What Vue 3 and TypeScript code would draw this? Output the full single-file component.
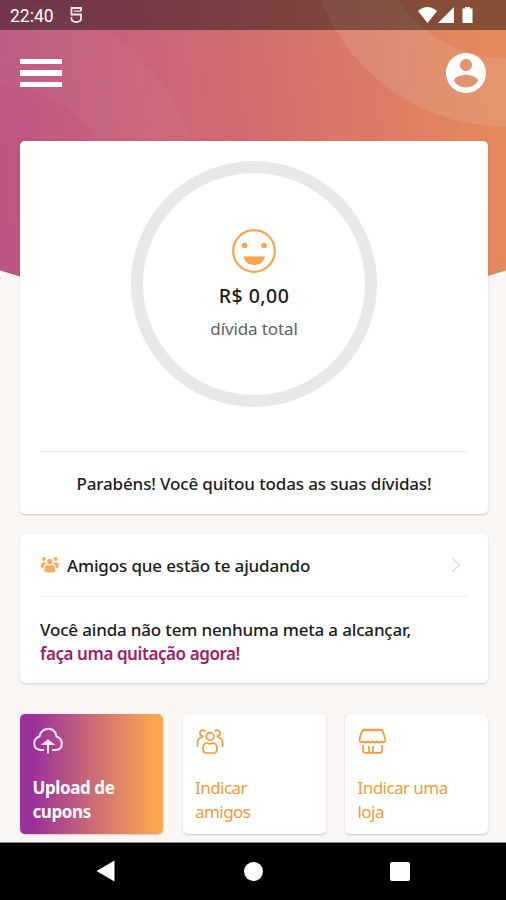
<script setup lang="ts">
interface Action {
  id: string
  lines: string[]
  primary?: boolean
}

const actions: Action[] = [
  { id: 'upload', lines: ['Upload de', 'cupons'], primary: true },
  { id: 'friends', lines: ['Indicar', 'amigos'] },
  { id: 'store', lines: ['Indicar uma', 'loja'] },
]
</script>

<template>
  <div class="screen">
    <svg class="backdrop" viewBox="0 0 506 290" aria-hidden="true">
      <defs>
        <linearGradient id="hero" gradientUnits="userSpaceOnUse" x1="0" y1="150" x2="490" y2="100">
          <stop offset="0" stop-color="#bd5684" />
          <stop offset="0.5" stop-color="#d06c70" />
          <stop offset="1" stop-color="#e4885d" />
        </linearGradient>
        <clipPath id="edge">
          <path d="M0 0H506V270.500L486 276.500Q420 290 253 290T20 276.500L0 270.500Z" />
        </clipPath>
      </defs>
      <g clip-path="url(#edge)">
        <rect width="506" height="290" fill="url(#hero)" />
        <circle cx="506" cy="-71" r="163.500" class="ring right" />
        <circle cx="0" cy="200" r="157" class="ring left" />
      </g>
    </svg>

    <header class="status">
      <span class="clock">22:40</span>
      <svg class="notice" viewBox="0 0 14 18">
        <path d="M12 5V2H2.500v6.500H12V12.500q0 3.500-4.700 3.500t-4.800-3.500V11" />
        <path d="M5 5.200H12" class="thin" />
      </svg>
      <svg class="signals" viewBox="0 0 56 18">
        <path d="M0 5Q9-3 19 5L9.500 17Z" />
        <path d="M36 1V17H20Z" />
        <path d="M47 1h5v1.500h2.500V17h-10V2.500H47Z" />
      </svg>
    </header>

    <nav class="topbar">
      <span class="burger"><i></i><i></i><i></i></span>
      <svg class="avatar" viewBox="2 2 20 20">
        <path d="M12 2C6.480 2 2 6.480 2 12s4.480 10 10 10 10-4.480 10-10S17.520 2 12 2zm0 3c1.660 0 3 1.340 3 3s-1.340 3-3 3-3-1.340-3-3 1.340-3 3-3zm0 14.200c-2.500 0-4.710-1.280-6-3.220.030-1.990 4-3.080 6-3.080 1.990 0 5.970 1.090 6 3.080-1.290 1.940-3.500 3.220-6 3.220z" />
      </svg>
    </nav>

    <main class="content">
      <section class="card debt">
        <div class="gauge">
          <svg class="smile" viewBox="0 0 44 44">
            <circle cx="22" cy="22" r="20.800" class="face" />
            <circle cx="12.500" cy="16.500" r="2.800" />
            <circle cx="32" cy="16.500" r="2.800" />
            <path d="M11.500 27.500H33Q31 36 22.200 36T11.500 27.500Z" />
          </svg>
          <strong class="amount">R$ 0,00</strong>
          <span class="caption">dívida total</span>
        </div>
        <p class="message">Parabéns! Você quitou todas as suas dívidas!</p>
      </section>

      <section class="card helpers">
        <div class="title">
          <svg class="crowd" viewBox="0 0 20 18">
            <circle cx="4" cy="3" r="2" /><circle cx="15.500" cy="3" r="2" />
            <circle cx="9.800" cy="5.500" r="2.700" />
            <path d="M1 11Q0 6 4 6.200q2 0 3 1.800-3 0-3.500 4Q2 12.500 1 11ZM18.500 11Q20 6 15.500 6.200q-2 0-3 1.800 3 0 3.500 4 1.800.500 2.500-1Z" />
            <path d="M4.500 13Q4.500 9 8 9q1.800 1 3.600 0 3.400 0 3.400 4l.500 2q-1.500 1.500-4 1.500H8q-2.500 0-4-1.500Z" />
          </svg>
          <span class="heading">Amigos que estão te ajudando</span>
          <svg class="chevron" viewBox="0 0 10 16"><path d="M1 1l7.500 7L1 15" /></svg>
        </div>
        <p class="goal">
          <span class="need">Você ainda não tem nenhuma meta a alcançar,</span><br />
          <a class="link">faça uma quitação agora!</a>
        </p>
      </section>

      <section class="actions">
        <article v-for="a in actions" :key="a.id" class="card action" :class="{ primary: a.primary }">
          <svg v-if="a.id === 'upload'" class="icon" viewBox="0 0 30 28">
            <path d="M11 23H7.500Q1.500 22.500 1.200 16.500 1.200 11.500 6.500 9.500 8 2.500 15 1.800 22 1.500 23.500 9.500 28.500 11 28.800 16.500 28.800 22.500 23 23H19" />
            <path d="M15 26.500V15M10.500 17L15 13.500 19.500 17Z" />
          </svg>
          <svg v-else-if="a.id === 'friends'" class="icon" viewBox="0 0 30 28">
            <circle cx="14" cy="9.500" r="3.800" />
            <path d="M9.500 4.500Q8 2.500 6 3.200 3.500 4 4 6.800 4.500 9 7.500 9.500M18.500 4.500Q20 2.500 22 3.200 24.500 4 24 6.800 23.500 9 20.500 9.500M1.500 20V15Q2 10.500 6.500 10.500M26.500 20V15Q26 10.500 21.500 10.500M11 16Q7 16.500 7 21q0 5 3 5h8q3 0 3-5 0-4.500-4-5-3 1.500-6 0Z" />
          </svg>
          <svg v-else class="icon" viewBox="0 0 30 28">
            <path d="M5 3H24" class="roof" />
            <path d="M5 3H24Q26.500 8 27.500 13.500q-1.500 3-4 1-2.200 2-4.500 0-2.200 2-4.500 0-2.300 2-4.500 0-2.200 2-4.500 0-3 2-4-1Q2 7 5 3ZM5 18v5.500q0 2.300 2 2.300H22q2 0 2-2.300V18M11 25.500V19M15 19v6.500" />
          </svg>
          <span class="label"><template v-for="(line, i) in a.lines" :key="line"><br v-if="i" />{{ line }}</template></span>
        </article>
      </section>
    </main>

    <footer class="system">
      <svg class="back" viewBox="0 0 18 22"><path d="M18 .500V21.500L0 11Z" /></svg>
      <span class="home"></span>
      <span class="recent"></span>
    </footer>
  </div>
</template>

<style>
body {
  margin: 0;
}
</style>

<style scoped>
.screen {
  position: relative;
  box-sizing: border-box;
  width: 506px;
  height: 900px;
  overflow: hidden;
  display: flex;
  flex-direction: column;
  background: #faf6f3;
  font-family: 'Noto Sans', 'Open Sans', sans-serif;
  color: #1c1c1c;
}
.backdrop {
  position: absolute;
  inset: 0 auto auto 0;
  width: 506px;
  height: 290px;
}
.ring {
  fill: none;
  stroke: #e8f0d8;
}
.ring.right {
  stroke-width: 69px;
  stroke-opacity: 0.13;
}
.ring.left {
  stroke-width: 86px;
  stroke-opacity: 0.04;
}
.status {
  position: relative;
  display: flex;
  align-items: center;
  height: 30px;
  padding: 0 32px 0 10px;
  flex: none;
  box-sizing: border-box;
  background: rgba(0, 0, 0, 0.41);
  color: #fff;
}
.clock {
  width: 44px;
  font: 400 17.500px/30px Roboto, sans-serif;
  padding-top: 2px;
}
.notice {
  width: 14px;
  height: 18px;
  margin-left: 15px;
  fill: none;
  stroke: #f3e6ea;
  stroke-width: 1.800;
}
.thin {
  stroke-width: 1.300;
}
.signals {
  width: 56px;
  height: 18px;
  margin-left: auto;
  fill: #fff;
}
.topbar {
  position: relative;
  display: flex;
  justify-content: space-between;
  flex: none;
  box-sizing: border-box;
  height: 111px;
  padding: 23px 20px 0;
}
.burger {
  display: flex;
  flex-direction: column;
  gap: 6px;
  width: 42px;
  padding-top: 6px;
}
.burger i {
  height: 5.300px;
  background: #fff;
}
.avatar {
  width: 40px;
  height: 40px;
  fill: #fff;
}
.content {
  position: relative;
  flex: none;
  box-sizing: border-box;
  height: 701px;
  padding: 0 18px 0 20px;
}
.card {
  box-sizing: border-box;
  border-radius: 5px;
  background: #fff;
  box-shadow: 0 1px 2px rgba(60, 50, 50, 0.22);
}
.debt {
  display: flex;
  flex-direction: column;
  height: 373px;
  padding: 19.500px 20px 0;
}
.gauge {
  box-sizing: border-box;
  display: flex;
  flex-direction: column;
  align-items: center;
  align-self: center;
  width: 246px;
  height: 246px;
  padding-top: 56.500px;
  border: 12px solid #e8e8e8;
  border-radius: 50%;
}
.smile {
  width: 44px;
  height: 44px;
  fill: #faa54c;
}
.face {
  fill: none;
  stroke: #faa54c;
  stroke-width: 2.200;
}
.amount {
  margin-top: 9px;
  font-size: 19.500px;
  font-weight: 500;
  line-height: 28px;
  letter-spacing: 0.450px;
}
.caption {
  margin-top: 6px;
  font-size: 17px;
  font-weight: 400;
  line-height: 26px;
  letter-spacing: -0.120px;
  color: #626262;
}
.message {
  margin: 44.500px 0 0;
  border-top: 1px solid #eee;
  padding-top: 19px;
  text-align: center;
  font-size: 17px;
  font-weight: 500;
  line-height: 26px;
  letter-spacing: -0.140px;
}
.helpers {
  height: 149px;
  margin-top: 20px;
  padding: 0 20px;
}
.title {
  display: flex;
  align-items: center;
  height: 62px;
  border-bottom: 1px solid #f0f0f0;
}
.crowd {
  width: 20px;
  height: 18px;
  margin-right: 7px;
  fill: #faad62;
}
.heading {
  font-size: 17px;
  font-weight: 500;
  line-height: 26px;
  padding-top: 2px;
  letter-spacing: -0.150px;
}
.chevron {
  width: 10px;
  height: 16px;
  margin: 0 7px 0 auto;
  fill: none;
  stroke: #dedede;
  stroke-width: 1.500;
}
.goal {
  margin: 21px 0 0;
  font-size: 17px;
  font-weight: 500;
  line-height: 24px;
  letter-spacing: -0.170px;
}
.link {
  color: #a01c6c;
  font-weight: 600;
  letter-spacing: -0.420px;
}
.actions {
  display: grid;
  grid-template-columns: 143px 143px 143px;
  justify-content: space-between;
  margin-top: 31px;
}
.action {
  height: 120px;
  padding: 13px 12px 0;
  color: #f59a3d;
}
.primary {
  background: linear-gradient(90deg, #9b2f9c 8%, #fba750 94%);
  color: #fff;
}
.icon {
  display: block;
  width: 30px;
  height: 28px;
  margin-left: 1px;
  fill: none;
  stroke: currentColor;
  stroke-width: 1.700;
}
.roof {
  stroke-width: 2.400;
}
.primary .icon {
  stroke: #fdeafa;
  stroke-width: 2;
}
.label {
  display: block;
  margin: 21px 0 0 0.500px;
  font-size: 17px;
  font-weight: 450;
  line-height: 24px;
  letter-spacing: -0.550px;
  white-space: nowrap;
}
.primary .label {
  font-weight: 700;
  letter-spacing: -0.400px;
}
.system {
  position: relative;
  flex: 1;
  display: flex;
  align-items: center;
  justify-content: space-between;
  box-sizing: border-box;
  padding: 0 96px 1px;
  background: #000;
  border-top: 1px solid #888;
}
.back {
  width: 19px;
  height: 22px;
  fill: #fff;
}
.home {
  width: 19px;
  height: 19px;
  margin-left: 2px;
  border-radius: 50%;
  background: #fff;
}
.recent {
  width: 20px;
  height: 19px;
  border-radius: 2px;
  background: #fff;
}
</style>
